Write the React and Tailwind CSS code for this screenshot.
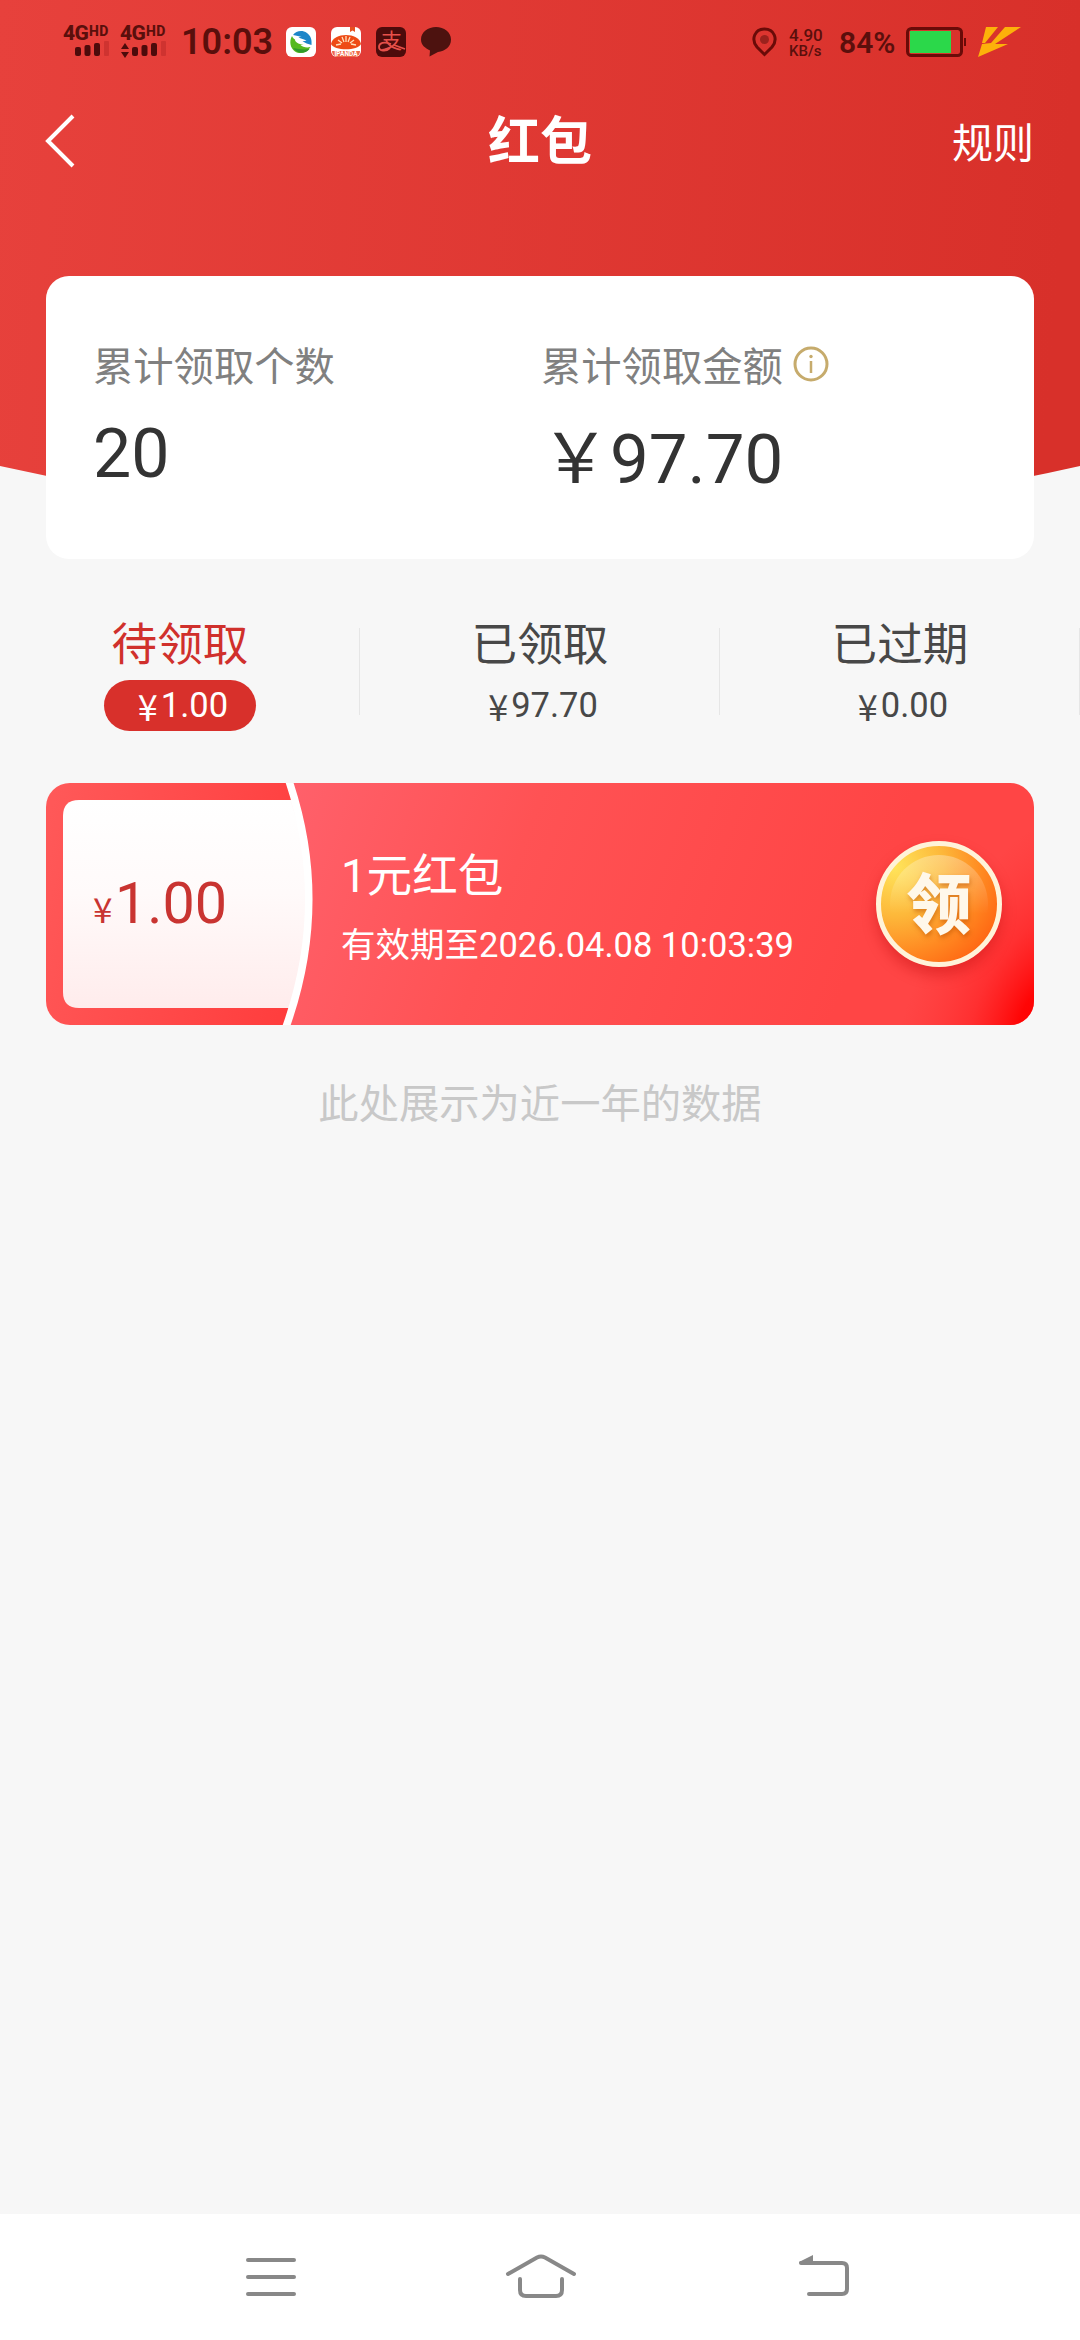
import clsx from 'clsx';

const tabs = [
    { id: 'pending', label: '待领取', amount: '1.00' },
    { id: 'received', label: '已领取', amount: '97.70' },
    { id: 'expired', label: '已过期', amount: '0.00' },
];

const coupons = [
    { id: 1, amount: '1.00', title: '1元红包', expires: '2026.04.08 10:03:39' },
];

function Signal({ arrows }) {
    return (
        <div className="w-[47px] h-[34px] text-[#5a0f0c]">
            <div className="flex items-start h-[17px]">
                <span className="w-[26px] text-[21px] leading-[17px] font-extrabold tracking-[-0.5px]">4G</span>
                <span className="text-[14px] leading-[13px] font-extrabold tracking-[0.4px]">HD</span>
            </div>
            <svg className="overflow-visible" width="47" height="17" viewBox="0 0 47 17" fill="#4d0b0b">
                {arrows && <path d="M5 1 9 7H1zM5 16 1 10h8z" />}
                <rect x="12" y="5" width="6" height="9" rx="2" />
                <rect x="21.500" y="3" width="6" height="11" rx="2" />
                <rect x="31" y="1" width="6" height="13" rx="2" />
                <rect x="41" y="-1" width="5" height="15" rx="1" fill="#cf3330" />
            </svg>
        </div>
    );
}

function StatusBar() {
    return (
        <div className="flex items-start h-[84px] pt-[25px] pl-[63px] pr-[57px] text-[#5a0f0c]">
            <Signal />
            <div className="ml-[10px]"><Signal arrows /></div>
            <span className="ml-[14px] w-[92px] text-[36px] leading-[34px] font-semibold">10:03</span>
            <div className="flex gap-[15px] ml-[13px] pt-[2px]">
                <svg width="30" height="30" viewBox="0 0 30 30">
                    <rect width="30" height="30" rx="6" fill="#fff" />
                    <path d="M7 8C10 4 16 2.500 21 6c4 3 5 7 4.500 12-3-1-7-2-9-4h4c-2-2-6-2-8-4h3c-2-1-5-1-8.500-2z" fill="#1c86c9" />
                    <path d="M6 9C3 14 4 21 9 24.500c5 3 12 1.500 15.500-4.500-4 1-8 0-10-2h3C12 17 9 15 9 12.500l3 1C8 12.500 7 11 6 9z" fill="#55b91f" />
                    <path d="M7 21c5 1 11 2 16.500 1C19 27.500 11 27 7 21z" fill="#2f9a2c" />
                </svg>
                <svg width="30" height="30" viewBox="0 0 30 30">
                    <rect width="30" height="30" rx="6" fill="#fff" />
                    <path d="M1 24h28a6 6 0 0 1-5 6H6a6 6 0 0 1-5-6z" fill="#f0694a" />
                    <path d="M19 0h5v5l-2.500-1.500L19 5z" fill="#e8501f" />
                    <path d="M0 17C2 5 28 5 30 17c-3 7-27 7-30 0z" fill="#ee4b16" />
                    <path d="M5 18 10 17M7 13l4 3M11 10l2 5M15 9v6M19 10l-2 5M23 13l-4 3M25 18l-5-1" stroke="#ffe0bd" strokeWidth="1.300" fill="none" />
                    <text x="15" y="28.500" textAnchor="middle" fontSize="6.500" fontWeight="700" fill="#fff">IPANDA</text>
                </svg>
                <svg width="30" height="30" viewBox="0 0 30 30">
                    <rect width="30" height="30" rx="6" fill="#4d0b0b" />
                    <text x="15.500" y="21" textAnchor="middle" fontSize="21" fill="#e8504a">支</text>
                    <path d="M15 17C8 14 3 16 3 20s7 5 11 1M18 18l11 4" stroke="#e8504a" strokeWidth="1.800" fill="none" />
                </svg>
                <svg width="30" height="30" viewBox="0 0 30 30" fill="#4d120f">
                    <path d="M15 0c8 0 15 5 15 12.500S24 24 17 25l-8.500 4.500.5-6C4 21 0 18 0 12.500 0 5 7 0 15 0z" />
                </svg>
            </div>
            <div className="flex items-start ml-auto pt-[2px]">
                <svg width="25" height="30" viewBox="0 0 25 30">
                    <path d="M12.500 27.500 5 20C-1.500 12 3 2 12.500 2S26.500 12 20 20z" fill="none" stroke="#6a0b08" strokeWidth="3" />
                    <circle cx="12.500" cy="12.500" r="4.500" fill="#9b221d" />
                </svg>
                <div className="w-[36px] ml-[12px] text-[17px] leading-[16px] font-medium">
                    <div>4.90</div>
                    <div className="text-[15px]">KB/s</div>
                </div>
                <span className="ml-[14px] w-[57px] text-[30px] leading-[32px] font-semibold">84%</span>
                <svg className="ml-[10px]" width="61" height="30" viewBox="0 0 61 30">
                    <rect x="1.500" y="1.500" width="54" height="27" rx="4" fill="none" stroke="#6a0b08" strokeWidth="3" />
                    <rect x="4" y="4" width="41" height="22" fill="#2bd84a" />
                    <rect x="58" y="11" width="2" height="8" fill="#6a0b08" />
                </svg>
                <svg className="ml-[11px]" width="45" height="30" viewBox="0 0 45 30" fill="#fdb10a">
                    <path d="M8 0h12L7 16H4zM27 0h16L17 17h13L0 30 4 17l9-1z" />
                </svg>
            </div>
        </div>
    );
}

function Summary() {
    return (
        <div className="relative flex h-[283px] mx-[46px] mt-[76px] pl-[47px] rounded-[23px] bg-white">
            <div className="w-[448px] pt-[66px]">
                <p className="text-[40.3px] leading-[52px] text-[#808080]">累计领取个数</p>
                <p className="mt-[20px] text-[68px] leading-[80px] text-[#333]">20</p>
            </div>
            <div className="pt-[66px]">
                <div className="flex items-center text-[40.3px] leading-[52px] text-[#808080]">
                    累计领取金额
                    <svg className="ml-[10px] -mt-[9px]" width="36" height="36" viewBox="0 0 36 36" fill="none">
                        <circle cx="18" cy="18" r="16" stroke="#c6ab6c" strokeWidth="3" />
                        <circle cx="18" cy="10.500" r="1.700" fill="#c6ab6c" />
                        <path d="M18 15v12" stroke="#c6ab6c" strokeWidth="2.500" />
                    </svg>
                </div>
                <p className="mt-[26px] text-[69px] leading-[80px] text-[#333]">￥97.70</p>
            </div>
        </div>
    );
}

function Tabs({ active }) {
    return (
        <div className="flex mt-[58px]">
            {tabs.map(tab => (
                <div key={tab.id} className="relative flex flex-col items-center w-[360px] h-[114px]">
                    <span className={clsx('text-[45.6px] leading-[58px]', tab.id === active ? 'text-[#d0302c]' : 'text-[#484848]')}>
                        {tab.label}
                    </span>
                    <span
                        className={clsx(
                            'flex justify-center items-center h-[51px] mt-[5px] pl-[34px] pr-[28px] rounded-full text-[34.5px] leading-[51px]',
                            tab.id === active ? 'bg-[#d8302b] text-white' : 'text-[#484848]'
                        )}
                    >
                        <span className="w-[23px] text-[36px] font-['Noto_Sans_CJK_SC',sans-serif]">¥</span>
                        {tab.amount}
                    </span>
                    <i className="absolute right-0 top-[11px] w-px h-[87px] bg-[#e6e6e6]" />
                </div>
            ))}
        </div>
    );
}

function CouponBackground() {
    return (
        <svg className="absolute inset-0" width="988" height="242" viewBox="0 0 988 242">
            <defs>
                <linearGradient id="stub" x1="0" y1="0" x2="1" y2="0.200">
                    <stop offset="0" stopColor="#ff5959" />
                    <stop offset="1" stopColor="#ff3c3c" />
                </linearGradient>
                <linearGradient id="paper" x1="0" y1="0" x2="0" y2="1">
                    <stop offset="0" stopColor="#fff" />
                    <stop offset="0.450" stopColor="#fffafa" />
                    <stop offset="1" stopColor="#ffecec" />
                </linearGradient>
                <linearGradient id="edge" x1="0" y1="0" x2="1" y2="0">
                    <stop offset="0" stopColor="#ffdcdc" stopOpacity="0" />
                    <stop offset="1" stopColor="#ffdcdc" />
                </linearGradient>
                <linearGradient id="body" gradientUnits="userSpaceOnUse" x1="250" y1="0" x2="800" y2="200">
                    <stop offset="0" stopColor="#ff606a" />
                    <stop offset="0.400" stopColor="#ff5254" />
                    <stop offset="1" stopColor="#ff4545" />
                </linearGradient>
                <radialGradient id="corner" gradientUnits="userSpaceOnUse" cx="0" cy="0" r="1" gradientTransform="translate(995 235) rotate(-65) scale(230 130)">
                    <stop offset="0" stopColor="#ff0000" />
                    <stop offset="0.150" stopColor="#ff0202" stopOpacity="0.950" />
                    <stop offset="0.500" stopColor="#ff1a1c" stopOpacity="0.500" />
                    <stop offset="1" stopColor="#ff3030" stopOpacity="0" />
                </radialGradient>
            </defs>
            <rect width="300" height="242" fill="url(#stub)" />
            <path d="M33 17H270V225H33Q17 225 17 209V33Q17 17 33 17z" fill="url(#paper)" />
            <path d="M244 17Q282 121 242 225H270V17z" fill="url(#edge)" />
            <path d="M243 0Q284 120 240 242H988V0z" fill="url(#body)" />
            <path d="M243 0Q284 120 240 242H988V0z" fill="url(#corner)" />
            <path d="M243 -2Q284 120 240 244" fill="none" stroke="#fff" strokeWidth="7.500" />
        </svg>
    );
}

function Coupon({ coupon }) {
    return (
        <div className="relative h-[242px] mx-[46px] rounded-[24px] overflow-hidden">
            <CouponBackground />
            <div className="relative flex h-full">
                <div className="flex items-baseline w-[249px] pl-[47px] pt-[85px] text-[#c93431]">
                    <span className="w-[22px] text-[35px] leading-[50px] font-['Noto_Sans_CJK_SC',sans-serif]">¥</span>
                    <span className="text-[57.5px] leading-[72px]">{coupon.amount}</span>
                </div>
                <div className="pl-[46px] pt-[65px] text-white">
                    <p className="text-[45.6px] leading-[58px]">{coupon.title}</p>
                    <p className="mt-[16px] text-[34.5px] leading-[46px] whitespace-pre">有效期至{coupon.expires}</p>
                </div>
                <button className="flex justify-center items-center size-[126px] ml-auto mr-[32px] mt-[58px] rounded-full border-[5px] border-[#fff3d9] bg-[radial-gradient(circle_at_12%_18%,#ffe45a_0%,#fdb83a_35%,#ff8a22_62%,#ff6a14_82%,#ff7a18_100%)] shadow-[0_8px_14px_rgba(190,10,10,0.4)]">
                    <span className="flex justify-center items-center size-[98px] pt-[5px] rounded-full bg-linear-[180deg,rgba(255,255,255,0.3),rgba(255,255,255,0)_60%] text-[65px] leading-none font-black text-[#fff8ea] text-shadow-[1px_3px_4px_rgba(190,80,0,0.5)]">
                        领
                    </span>
                </button>
            </div>
        </div>
    );
}

function NavBar() {
    return (
        <div className="flex items-center h-[126px] mt-auto pl-[244px] bg-white">
            <svg width="54" height="44" viewBox="0 0 54 44" stroke="#888" strokeWidth="4" strokeLinecap="round">
                <path d="M4 5h46M4 22h46M4 39h46" />
            </svg>
            <svg className="ml-[206px]" width="74" height="46" viewBox="0 0 74 46" fill="none" stroke="#888" strokeWidth="4" strokeLinecap="round">
                <path d="M4 20 33 3.500Q37 1.500 41 3.500L70 20M16 25V36Q16 42 22 42H52Q58 42 58 36V25" />
            </svg>
            <svg className="ml-[219px]" width="54" height="46" viewBox="0 0 54 46" fill="none" stroke="#888" strokeWidth="4" strokeLinecap="round">
                <path d="M4 9H45Q50 9 50 14V35Q50 40 45 40H12" />
                <path d="M2 8 16 1V10H3z" fill="#888" stroke="none" />
            </svg>
        </div>
    );
}

export default function App() {
    return (
        <div className="relative flex flex-col w-[1080px] h-[2340px] overflow-hidden bg-[#f7f7f7] font-['Roboto','Noto_Sans_CJK_SC',sans-serif]" lang="zh-CN">
            <svg className="absolute top-0 left-0" width="1080" height="540" viewBox="0 0 1080 540">
                <defs>
                    <linearGradient id="header" x1="0" y1="0" x2="1" y2="0.040">
                        <stop offset="0" stopColor="#e7413c" />
                        <stop offset="1" stopColor="#d8302a" />
                    </linearGradient>
                </defs>
                <path d="M0 0H1080V466Q540 588 0 466z" fill="url(#header)" />
            </svg>
            <div className="relative">
                <StatusBar />
                <div className="flex items-center justify-between h-[116px] pl-[44px] pr-[46px] text-white">
                    <svg width="84" height="56" viewBox="0 0 84 56" fill="none" stroke="#fff" strokeWidth="4">
                        <path d="M29 2 4 27 29 52" />
                    </svg>
                    <h1 className="pt-[2px] text-[52px] leading-[64px] font-bold">红包</h1>
                    <span className="pt-[3px] text-[41px] leading-[56px]">规则</span>
                </div>
                <Summary />
            </div>
            <Tabs active="pending" />
            <div className="mt-[52px]">
                {coupons.map(coupon => (
                    <Coupon key={coupon.id} coupon={coupon} />
                ))}
            </div>
            <p className="mt-[52px] text-center text-[40.3px] leading-[56px] text-[#c8c8c8]">此处展示为近一年的数据</p>
            <NavBar />
        </div>
    );
}
